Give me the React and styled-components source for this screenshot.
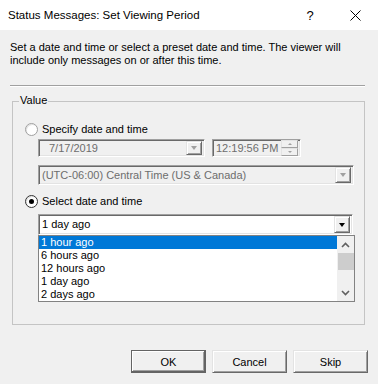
import React from 'react';
import styled, { createGlobalStyle } from 'styled-components';

const Global = createGlobalStyle`
  html, body { margin: 0; padding: 0; background: #f0f0f0; }
  body { font-family: "Liberation Sans", Arial, sans-serif; font-size: 11px; color: #000; }
`;

const Window = styled.div`
  width: 378px;
  height: 384px;
  background: #f0f0f0;
  display: flex;
  flex-direction: column;
  overflow: hidden;
`;

const TitleBar = styled.div`
  height: 30px;
  flex-shrink: 0;
  background: #fff;
  display: flex;
  align-items: center;
  padding-left: 8px;
`;

const Title = styled.div`
  flex: 1;
  font-size: 11.5px;
  color: #000;
`;

const TitleBtn = styled.div`
  width: ${p => p.$w}px;
  margin-left: ${p => p.$ml || 0}px;
  height: 30px;
  display: flex;
  align-items: center;
  justify-content: center;
  font-size: 13px;
  color: #000;
`;

const Body = styled.div`
  padding: 11px 10px 0 10px;
  display: flex;
  flex-direction: column;
`;

const Description = styled.p`
  margin: 0;
  line-height: 13px;
  width: 340px;
`;

const Separator = styled.div`
  margin-top: 18px;
  height: 0;
  border-top: 1px solid #a0a0a0;
  border-bottom: 1px solid #fff;
  width: 355px;
`;

const Group = styled.div`
  position: relative;
  margin-top: 14px;
  margin-left: 2px;
  width: 353px;
  border: 1px solid #c4c4c4;
  padding: 21px 0 22px 12px;
  box-sizing: border-box;
  display: flex;
  flex-direction: column;
`;

const Legend = styled.span`
  position: absolute;
  top: -8px;
  left: 6px;
  padding: 0 1px;
  background: #f0f0f0;
  line-height: 13px;
`;

const RadioRow = styled.label`
  display: flex;
  align-items: center;
  height: 13px;
  gap: 4px;
  margin-top: ${p => p.$mt || 0}px;
  line-height: 13px;
`;

const RadioCircle = styled.span`
  width: 13px;
  height: 13px;
  box-sizing: border-box;
  border-radius: 50%;
  border: 1px solid ${p => (p.$checked ? '#333' : '#a0a0a0')};
  background: #fff;
  box-shadow: inset 1px 1px 0 #e3e3e3;
  display: flex;
  align-items: center;
  justify-content: center;
  &::after {
    content: '';
    display: ${p => (p.$checked ? 'block' : 'none')};
    width: 5px;
    height: 5px;
    border-radius: 50%;
    background: #000;
  }
`;

const Indent = styled.div`
  margin-left: 13px;
  margin-top: ${p => p.$mt || 0}px;
  display: flex;
  align-items: flex-start;
  gap: ${p => p.$gap || 0}px;
`;

const Field = styled.div`
  width: ${p => p.$w}px;
  height: ${p => p.$h}px;
  box-sizing: border-box;
  border-top: 1px solid #a0a0a0;
  border-left: 1px solid #a0a0a0;
  border-bottom: 1px solid #fff;
  border-right: 1px solid #fff;
  box-shadow: inset 1px 1px 0 #696969, inset -1px -1px 0 #e3e3e3;
  background: ${p => (p.$disabled ? '#f0f0f0' : '#fff')};
  color: ${p => (p.$disabled ? '#6d6d6d' : '#000')};
  display: flex;
  align-items: center;
  padding: 0 2px 0 ${p => p.$pl || 3}px;
`;

const FieldText = styled.span`
  flex: 1;
  white-space: nowrap;
  overflow: hidden;
  line-height: 13px;
`;

const DropBtn = styled.div`
  width: 16px;
  height: ${p => p.$h}px;
  box-sizing: border-box;
  background: #f0f0f0;
  border-top: 1px solid #e3e3e3;
  border-left: 1px solid #e3e3e3;
  border-bottom: 1px solid #696969;
  border-right: 1px solid #696969;
  box-shadow: inset 1px 1px 0 #fff, inset -1px -1px 0 #a0a0a0;
  display: flex;
  align-items: center;
  justify-content: center;
  &::after {
    content: '';
    width: 0;
    height: 0;
    border-left: 3.5px solid transparent;
    border-right: 3.5px solid transparent;
    border-top: 4px solid ${p => (p.$disabled ? '#a0a0a0' : '#000')};
  }
`;

const Spin = styled.div`
  width: 17px;
  height: 16px;
  display: flex;
  flex-direction: column;
`;

const SpinHalf = styled.div`
  flex: 1;
  box-sizing: border-box;
  background: #f0f0f0;
  border-top: 1px solid #e3e3e3;
  border-left: 1px solid #e3e3e3;
  border-bottom: 1px solid #a0a0a0;
  border-right: 1px solid #a0a0a0;
  display: flex;
  align-items: center;
  justify-content: center;
  &::after {
    content: '';
    width: 0;
    height: 0;
    border-left: 2px solid transparent;
    border-right: 2px solid transparent;
    ${p => (p.$up ? 'border-bottom: 2px solid #a0a0a0;' : 'border-top: 2px solid #a0a0a0;')}
  }
`;

const ComboWrap = styled.div`
  margin-left: 13px;
  margin-top: 6px;
  display: flex;
  flex-direction: column;
  align-items: flex-start;
`;

const List = styled.div`
  width: 317px;
  height: 67px;
  box-sizing: border-box;
  border: 1px solid #828282;
  background: #fff;
  display: flex;
`;

const Items = styled.div`
  flex: 1;
  display: flex;
  flex-direction: column;
`;

const Item = styled.div`
  height: 13px;
  line-height: 13px;
  padding-left: 2px;
  background: ${p => (p.$sel ? '#0078d7' : 'transparent')};
  color: ${p => (p.$sel ? '#fff' : '#000')};
  white-space: nowrap;
`;

const ScrollBar = styled.div`
  width: 17px;
  background: #f0f0f0;
  display: flex;
  flex-direction: column;
`;

const ScrollArrow = styled.div`
  height: 17px;
  display: flex;
  align-items: center;
  justify-content: center;
`;

const Thumb = styled.div`
  height: 17px;
  background: #cdcdcd;
  margin: 0 0 0 1px;
`;

const Track = styled.div`
  flex: 1;
`;

const Buttons = styled.div`
  margin-top: 25px;
  display: flex;
  justify-content: flex-end;
  gap: 6px;
  width: 358px;
`;

const Button = styled.button`
  width: 75px;
  height: 23px;
  box-sizing: border-box;
  font-family: "Liberation Sans", Arial, sans-serif;
  font-size: 11px;
  color: #000;
  background: #f0f0f0;
  padding: 0;
  border: 1px solid ${p => (p.$default ? '#646464' : '#e3e3e3')};
  ${p =>
    p.$default
      ? 'box-shadow: inset -1px -1px 0 #646464, inset 1px 1px 0 #fff, inset -2px -2px 0 #a0a0a0;'
      : 'border-right-color: #696969; border-bottom-color: #696969; border-top-color:#e3e3e3; border-left-color:#e3e3e3; box-shadow: inset 1px 1px 0 #fff, inset -1px -1px 0 #a0a0a0;'}
`;

const Chevron = ({ up }) => (
  <svg width="9" height="6" viewBox="0 0 9 6">
    <path d={up ? 'M1 5 L4.5 1.5 L8 5' : 'M1 1 L4.5 4.5 L8 1'} fill="none" stroke="#606060" strokeWidth="1.6" />
  </svg>
);

export default function App() {
  return (
    <>
      <Global />
      <Window>
        <TitleBar>
          <Title>Status Messages: Set Viewing Period</Title>
          <TitleBtn $w={20}>?</TitleBtn>
          <TitleBtn $w={46} $ml={12}>
            <svg width="11" height="11" viewBox="0 0 11 11">
              <path d="M0.5 0.5 L10.5 10.5 M10.5 0.5 L0.5 10.5" stroke="#000" strokeWidth="1" />
            </svg>
          </TitleBtn>
        </TitleBar>
        <Body>
          <Description>
            Set a date and time or select a preset date and time. The viewer will include only messages on or after this time.
          </Description>
          <Separator />
          <Group>
            <Legend>Value</Legend>
            <RadioRow>
              <RadioCircle />
              <span>Specify date and time</span>
            </RadioRow>
            <Indent $mt={3} $gap={7}>
              <Field $w={167} $h={18} $disabled $pl={10}>
                <FieldText>7/17/2019</FieldText>
                <DropBtn $h={14} $disabled />
              </Field>
              <Field $w={89} $h={18} $disabled $pl={3}>
                <FieldText>12:19:56 PM</FieldText>
                <Spin>
                  <SpinHalf $up />
                  <SpinHalf />
                </Spin>
              </Field>
            </Indent>
            <Indent $mt={8}>
              <Field $w={316} $h={20} $disabled $pl={3}>
                <FieldText>(UTC-06:00) Central Time (US &amp; Canada)</FieldText>
                <DropBtn $h={16} $disabled />
              </Field>
            </Indent>
            <RadioRow $mt={10}>
              <RadioCircle $checked />
              <span>Select date and time</span>
            </RadioRow>
            <ComboWrap>
              <Field $w={315} $h={21} $pl={3}>
                <FieldText>1 day ago</FieldText>
                <DropBtn $h={17} />
              </Field>
              <List>
                <Items>
                  <Item $sel>1 hour ago</Item>
                  <Item>6 hours ago</Item>
                  <Item>12 hours ago</Item>
                  <Item>1 day ago</Item>
                  <Item>2 days ago</Item>
                </Items>
                <ScrollBar>
                  <ScrollArrow><Chevron up /></ScrollArrow>
                  <Thumb />
                  <Track />
                  <ScrollArrow><Chevron /></ScrollArrow>
                </ScrollBar>
              </List>
            </ComboWrap>
          </Group>
          <Buttons>
            <Button $default>OK</Button>
            <Button>Cancel</Button>
            <Button>Skip</Button>
          </Buttons>
        </Body>
      </Window>
    </>
  );
}
